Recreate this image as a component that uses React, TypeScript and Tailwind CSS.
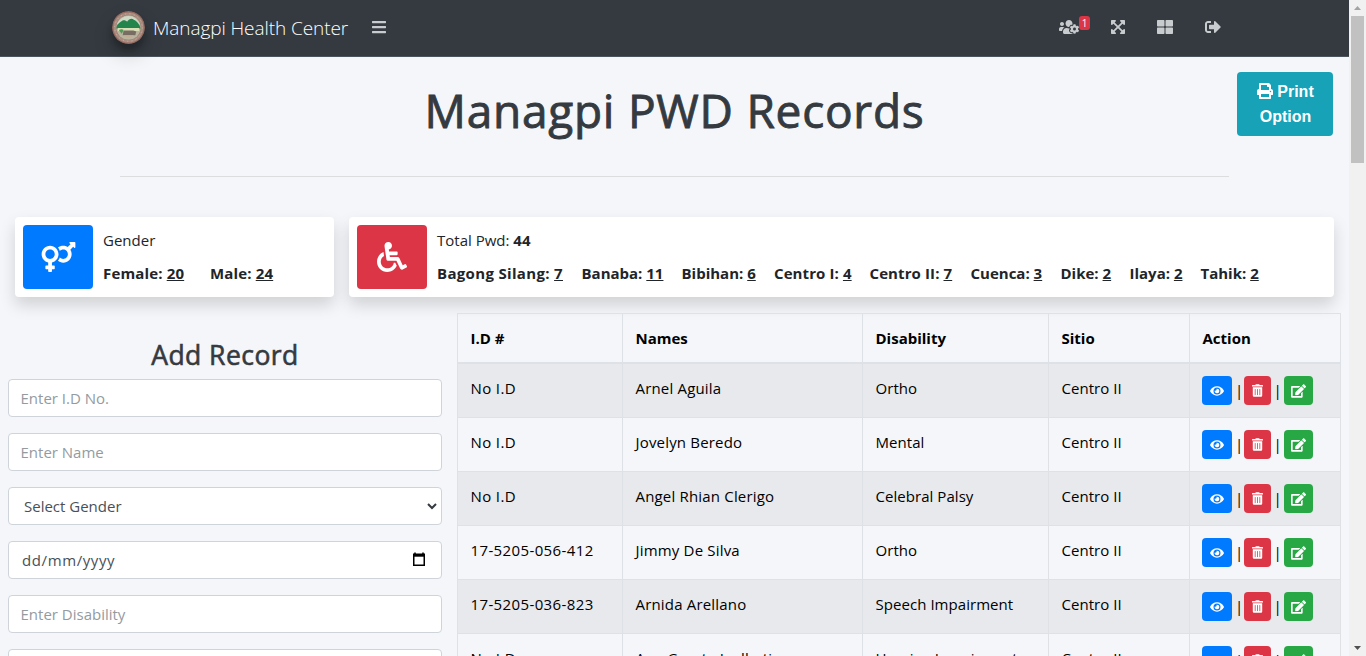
import React from "react";
import { FaBars, FaUsersCog, FaExpandArrowsAlt, FaThLarge, FaSignOutAlt, FaPrint, FaVenusMars, FaWheelchair, FaEye, FaTrashAlt, FaEdit } from "react-icons/fa";

const sitios: [string, number, string, string][] = [
  ["Bagong Silang", 7, "w-[144.5px]", "tracking-[0.33px]"],
  ["Banaba", 11, "w-[100px]", ""],
  ["Bibihan", 6, "w-[92.5px]", ""],
  ["Centro I", 4, "w-[95.5px]", "tracking-[0.1px]"],
  ["Centro II", 7, "w-[101px]", "tracking-[0.1px]"],
  ["Cuenca", 3, "w-[90px]", ""],
  ["Dike", 2, "w-[69px]", ""],
  ["Ilaya", 2, "w-[71px]", ""],
  ["Tahik", 2, "w-[70px]", ""],
];

const rows = [
  ["No I.D", "Arnel Aguila", "Ortho", "Centro II"],
  ["No I.D", "Jovelyn Beredo", "Mental", "Centro II"],
  ["No I.D", "Angel Rhian Clerigo", "Celebral Palsy", "Centro II"],
  ["17-5205-056-412", "Jimmy De Silva", "Ortho", "Centro II"],
  ["17-5205-036-823", "Arnida Arellano", "Speech Impairment", "Centro II"],
  ["No I.D", "Ana Greata Igalbatin", "Hearing Impairment", "Centro II"],
];

const cols = "grid grid-cols-[165px_240px_186px_141px_151px]";
const tracking = ["tracking-[0.38px]", "tracking-[0.18px]", "tracking-[0.05px]", "tracking-[0.05px]"];

function Seal() {
  return (
    <svg viewBox="0 0 34 34" className="size-[33px] rounded-full shadow-[0_10px_20px_rgba(0,0,0,.19),0_6px_6px_rgba(0,0,0,.23)]">
      <circle cx="17" cy="17" r="17" fill="#96695f" />
      <circle cx="17" cy="17" r="14.2" fill="none" stroke="#a98c80" strokeWidth="2.6" />
      <circle cx="17" cy="17" r="14.2" fill="none" stroke="#cbb6a8" strokeWidth="1" strokeDasharray="1 3.500" />
      <circle cx="17" cy="17" r="12.6" fill="#b9b4a0" />
      <path d="M5 14a12.600 12.600 0 0 1 24 0z" fill="#cfd8c4" />
      <path d="M4.500 18c0-4 3-6 6-8 2-1 4 0 5 1 2-3 5-4 7-2 3 1 6 5 7 9z" fill="#23854c" />
      <path d="M6 17.500h22v3H6z" fill="#d9e0b8" />
      <path d="M7 19.500c2-1 4-1 5 0l-2 4z" fill="#4f9a55" />
      <path d="M12 20h10l3 1-1 4H11z" fill="#776d62" />
      <path d="M11 25h12l-6 3z" fill="#c2ac92" />
    </svg>
  );
}

function Field({ children, className = "" }: { children: React.ReactNode; className?: string }) {
  return (
    <div className={`flex h-[38px] shrink-0 items-center rounded border border-[#ced4da] bg-white text-[15px] ${className}`}>{children}</div>
  );
}

export default function App() {
  return (
    <div className="flex h-[656px] w-[1366px] overflow-hidden bg-[#f4f6f9] font-['Open_Sans','Noto_Sans',sans-serif] text-[15px] text-[#212529]">
      <div className="flex w-[1349px] flex-col overflow-hidden">
        <nav className="flex h-[57px] shrink-0 items-center border-b border-[#4b545c] bg-[#343a40] pl-[112px]">
          <div className="flex w-[259px] items-center gap-2 pb-[2px]">
            <Seal />
            <span className="whitespace-nowrap pt-[2px] text-[19px] font-light tracking-[-0.08px] text-white">Managpi Health Center</span>
          </div>
          <FaBars className="mb-[2px] size-4 text-[#c9ccce]" />
          <div className="ml-[672px] flex items-center pb-[2px] text-[#c9ccce]">
            <div className="flex w-[51px] items-start">
              <FaUsersCog className="h-4 w-5" />
              <span className="-mt-[3px] flex h-[14px] w-[11px] items-center justify-center rounded-[3px] bg-[#dc3545] text-[10px] text-white">1</span>
            </div>
            <FaExpandArrowsAlt className="size-4" />
            <FaThLarge className="ml-[31px] size-4" />
            <FaSignOutAlt className="ml-[32px] size-4" />
          </div>
        </nav>

        <header className="flex h-[119px] shrink-0 pl-[120px]">
          <h1 className="mt-[21px] w-[1109px] whitespace-nowrap text-center text-[46px] leading-[64px] tracking-[0.75px] text-[#343a40] [-webkit-text-stroke:0.9px_#343a40]">Managpi PWD Records</h1>
          <button className="ml-2 mt-[15px] h-16 w-24 rounded bg-[#17a2b8] pl-px font-['Liberation_Sans',sans-serif] text-[16px] font-bold leading-[25px] text-white">
            <FaPrint className="mr-1 inline size-4 align-[-2px]" />Print
            <br />
            Option
          </button>
        </header>
        <div className="mx-[120px] h-px shrink-0 bg-black/10" />

        <section className="mt-10 flex h-20 shrink-0 gap-[15px] pl-[15px]">
          <div className="flex w-[319px] rounded bg-white p-2 shadow-[0_8px_16px_rgba(0,0,0,.15)]">
            <div className="flex h-16 w-[70px] items-center justify-center rounded bg-[#007bff] text-white">
              <FaVenusMars className="h-[30px] w-[35px]" />
            </div>
            <div className="pl-[10px]">
              <div className="h-8 leading-[31px]">Gender</div>
              <div className="flex whitespace-nowrap font-bold leading-[32px] tracking-[0.15px]">
                <span className="w-[107px]">Female: <u>20</u></span>
                <span>Male: <u>24</u></span>
              </div>
            </div>
          </div>
          <div className="flex w-[985px] rounded bg-white p-2 shadow-[0_8px_16px_rgba(0,0,0,.15)]">
            <div className="flex h-16 w-[70px] shrink-0 items-center justify-center rounded bg-[#dc3545] text-white">
              <FaWheelchair className="size-[30px]" />
            </div>
            <div className="pl-[10px]">
              <div className="h-8 leading-[31px]">Total Pwd: <b>44</b></div>
              <div className="flex whitespace-nowrap font-bold leading-[32px]">
                {sitios.map(([name, count, width, spacing]) => (
                  <span key={name} className={`${width} ${spacing}`}>{name}: <u>{count}</u></span>
                ))}
              </div>
            </div>
          </div>
        </section>

        <main className="flex pl-2 pt-4">
          <form className="flex h-[343px] w-[434px] shrink-0 flex-col gap-4 overflow-hidden">
            <h2 className="-mb-4 h-[66px] shrink-0 pt-[22px] text-center text-[26.5px] leading-[40px] tracking-[0.45px] text-[#343a40] [-webkit-text-stroke:0.6px_#343a40]">Add Record</h2>
            <Field className="px-[11.5px] text-[#939ba2]">Enter I.D No.</Field>
            <Field className="px-[11.5px] text-[#939ba2]">Enter Name</Field>
            <Field className="justify-between pl-[15px] pr-1 text-[#495057]">
              Select Gender
              <svg viewBox="0 0 10 8" className="h-2 w-[10px]"><path d="M1 2l4 4 4-4" fill="none" stroke="#343a40" strokeWidth="2" /></svg>
            </Field>
            <Field className="justify-between pl-[13px] pr-[15px] tracking-[0.6px] text-[#495057]">
              dd/mm/yyyy
              <svg viewBox="0 0 14 15" className="mb-px h-[15px] w-[14px]"><path d="M1.750 3v10.200h10.500V3zM3 .5v2M11 .5v2" fill="none" stroke="#000" strokeWidth="1.5" /><path d="M1 1.500h12v3.200H1z" /></svg>
            </Field>
            <Field className="px-[11.5px] text-[#939ba2]">Enter Disability</Field>
            <Field>{null}</Field>
          </form>
          <div className="ml-[15px] h-[343px] w-[884px] overflow-hidden border-l border-t border-[#dee2e6] text-black">
            <div className={`${cols} h-[50px] border-b-2 border-[#dee2e6] font-bold`}>
              {["I.D #", "Names", "Disability", "Sitio", "Action"].map((h) => (
                <div key={h} className="border-r border-[#dee2e6] pl-[12.5px] leading-[48px]">{h}</div>
              ))}
            </div>
            {rows.map((r, i) => (
              <div key={i} className={`${cols} h-[54px] border-b border-[#dee2e6] ${i % 2 === 0 ? "bg-[#e7e9ec]" : ""}`}>
                {r.map((c, j) => (
                  <div key={j} className={`whitespace-nowrap border-r border-[#dee2e6] pl-[12.5px] leading-[49px] ${tracking[j]}`}>{c}</div>
                ))}
                <div className="flex items-center border-r border-[#dee2e6] pl-3 text-white">
                  <span className="flex h-[29px] w-[30px] items-center justify-center rounded bg-[#007bff]"><FaEye className="h-[14px] w-[14px]" /></span>
                  <span className="w-3 pl-[2px] text-center text-black">|</span>
                  <span className="flex h-[29px] w-[27px] items-center justify-center rounded bg-[#dc3545]"><FaTrashAlt className="h-[13px] w-[11px]" /></span>
                  <span className="w-[13px] text-center text-black">|</span>
                  <span className="flex h-[29px] w-[29px] items-center justify-center rounded bg-[#28a745]"><FaEdit className="h-[14px] w-[15px]" /></span>
                </div>
              </div>
            ))}
          </div>
        </main>
      </div>
      <div className="flex w-[17px] flex-col items-center bg-[#f1f1f1]">
        <svg viewBox="0 0 17 16" className="h-4 w-[17px]"><path d="M5 10h7L8.500 6z" fill="#a3a3a3" /></svg>
        <div className="h-[147px] w-[13px] bg-[#c1c1c1]" />
        <svg viewBox="0 0 17 16" className="mt-auto h-4 w-[17px]"><path d="M5 6h7L8.500 10z" fill="#505050" /></svg>
      </div>
    </div>
  );
}
